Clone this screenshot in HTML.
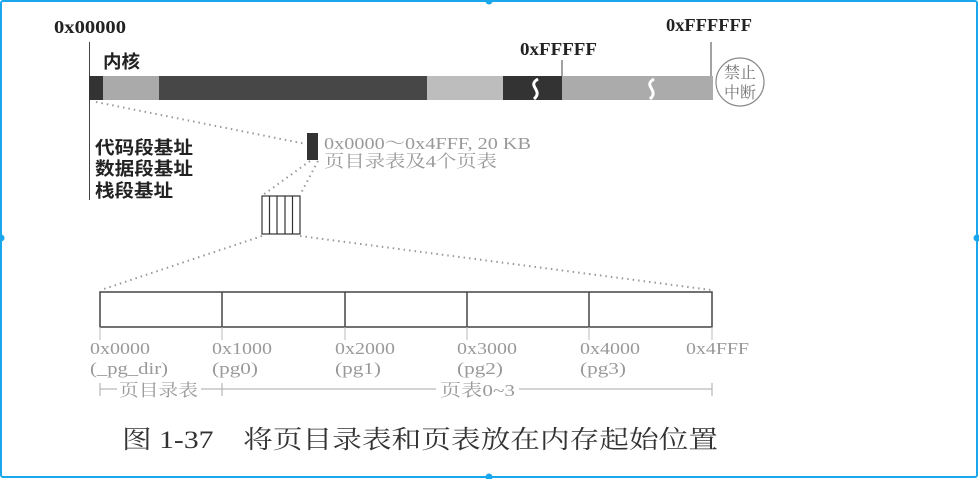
<!DOCTYPE html>
<html><head><meta charset="utf-8"><style>
html,body{margin:0;padding:0;background:#fff;}
body{width:979px;height:479px;overflow:hidden;}
text{font-family:"Liberation Serif","Noto Serif CJK SC",serif;}
.b{font-weight:bold;fill:#222;font-size:18px;}
.c{font-family:"Liberation Sans","Noto Sans CJK SC",sans-serif;font-weight:bold;fill:#222;font-size:18px;}
.g{fill:#999;font-size:17px;}
</style></head><body>
<svg width="979" height="479" viewBox="0 0 979 479" xmlns="http://www.w3.org/2000/svg">
<rect x="1" y="1" width="976" height="476" fill="#fff" stroke="#1aa7ec" stroke-width="2" rx="2"/>
<circle cx="489" cy="1" r="3.5" fill="#1aa7ec"/>
<circle cx="1" cy="238" r="3.5" fill="#1aa7ec"/>
<circle cx="977" cy="238" r="3.5" fill="#1aa7ec"/>
<circle cx="489" cy="477" r="3.5" fill="#1aa7ec"/>

<text x="54" y="33" class="b" textLength="72" lengthAdjust="spacingAndGlyphs">0x00000</text>
<text x="666" y="31" class="b" textLength="86" lengthAdjust="spacingAndGlyphs">0xFFFFFF</text>
<text x="520" y="55" class="b" textLength="77" lengthAdjust="spacingAndGlyphs">0xFFFFF</text>
<text x="103" y="68" class="c" textLength="37" lengthAdjust="spacingAndGlyphs">内核</text>

<line x1="89.5" y1="42" x2="89.5" y2="200" stroke="#444" stroke-width="1"/>
<line x1="562" y1="60" x2="562" y2="100" stroke="#444"/>
<line x1="711" y1="42" x2="711" y2="76" stroke="#444"/>

<rect x="89" y="76" width="14" height="24" fill="#333"/>
<rect x="103" y="76" width="56" height="24" fill="#aaa"/>
<rect x="159" y="76" width="268" height="24" fill="#474747"/>
<rect x="427" y="76" width="76" height="24" fill="#bdbdbd"/>
<rect x="503" y="76" width="59" height="24" fill="#333"/>
<rect x="562" y="76" width="151" height="24" fill="#ababab"/>
<path d="M538 79 C526 86 544 90 534 99" stroke="#fff" stroke-width="3" fill="none"/>
<path d="M654 79 C642 86 660 90 650 99" stroke="#fff" stroke-width="3" fill="none"/>

<circle cx="740" cy="82" r="24" fill="#fff" stroke="#888" stroke-width="1.2"/>
<text x="740" y="78" text-anchor="middle" style="font-size:16px;fill:#777">禁止</text>
<text x="740" y="98" text-anchor="middle" style="font-size:16px;fill:#777">中断</text>

<text x="95" y="154" class="c" textLength="98" lengthAdjust="spacingAndGlyphs">代码段基址</text>
<text x="95" y="175" class="c" textLength="98" lengthAdjust="spacingAndGlyphs">数据段基址</text>
<text x="95" y="197" class="c" textLength="78" lengthAdjust="spacingAndGlyphs">栈段基址</text>

<g stroke="#999" stroke-width="2" stroke-dasharray="1.5 4" fill="none">
<line x1="96" y1="102" x2="306" y2="144"/>
<line x1="310" y1="161" x2="263" y2="195"/>
<line x1="318" y1="161" x2="300" y2="195"/>
<line x1="262" y1="236" x2="101" y2="290"/>
<line x1="300" y1="236" x2="711" y2="290"/>
</g>
<rect x="307" y="133" width="11" height="27" fill="#333"/>
<text x="324" y="149" class="g" textLength="207" lengthAdjust="spacingAndGlyphs">0x0000～0x4FFF, 20 KB</text>
<text x="324" y="167" class="g" textLength="173" lengthAdjust="spacingAndGlyphs">页目录表及4个页表</text>

<g stroke="#333" stroke-width="1.2" fill="none">
<rect x="262" y="196" width="38" height="38"/>
<line x1="269.5" y1="196" x2="269.5" y2="234"/>
<line x1="277" y1="196" x2="277" y2="234"/>
<line x1="285" y1="196" x2="285" y2="234"/>
<line x1="292.5" y1="196" x2="292.5" y2="234"/>
</g>

<g stroke="#444" stroke-width="1.5" fill="none">
<rect x="100" y="292" width="612" height="35"/>
<line x1="222" y1="292" x2="222" y2="327"/>
<line x1="345" y1="292" x2="345" y2="327"/>
<line x1="467" y1="292" x2="467" y2="327"/>
<line x1="589" y1="292" x2="589" y2="327"/>
</g>
<g stroke="#bbb" stroke-width="1">
<line x1="100" y1="327" x2="100" y2="340"/>
<line x1="222" y1="327" x2="222" y2="340"/>
<line x1="345" y1="327" x2="345" y2="340"/>
<line x1="467" y1="327" x2="467" y2="340"/>
<line x1="589" y1="327" x2="589" y2="340"/>
<line x1="712" y1="327" x2="712" y2="340"/>
</g>
<g class="g">
<text x="90" y="354" class="g" textLength="60" lengthAdjust="spacingAndGlyphs">0x0000</text><text x="90" y="374" class="g" textLength="78" lengthAdjust="spacingAndGlyphs">(_pg_dir)</text>
<text x="212" y="354" class="g" textLength="60" lengthAdjust="spacingAndGlyphs">0x1000</text><text x="212" y="374" class="g" textLength="46" lengthAdjust="spacingAndGlyphs">(pg0)</text>
<text x="335" y="354" class="g" textLength="60" lengthAdjust="spacingAndGlyphs">0x2000</text><text x="335" y="374" class="g" textLength="46" lengthAdjust="spacingAndGlyphs">(pg1)</text>
<text x="457" y="354" class="g" textLength="60" lengthAdjust="spacingAndGlyphs">0x3000</text><text x="457" y="374" class="g" textLength="46" lengthAdjust="spacingAndGlyphs">(pg2)</text>
<text x="580" y="354" class="g" textLength="60" lengthAdjust="spacingAndGlyphs">0x4000</text><text x="580" y="374" class="g" textLength="46" lengthAdjust="spacingAndGlyphs">(pg3)</text>
<text x="686" y="354" class="g" textLength="63" lengthAdjust="spacingAndGlyphs">0x4FFF</text>
</g>

<g stroke="#aaa" stroke-width="1">
<line x1="100" y1="383" x2="100" y2="396"/>
<line x1="100" y1="389" x2="117" y2="389"/>
<line x1="201" y1="389" x2="222" y2="389"/>
<line x1="222" y1="383" x2="222" y2="396"/>
<line x1="222" y1="389" x2="436" y2="389"/>
<line x1="519" y1="389" x2="712" y2="389"/>
<line x1="712" y1="383" x2="712" y2="396"/>
</g>
<text x="119" y="396" class="g" textLength="79" lengthAdjust="spacingAndGlyphs">页目录表</text>
<text x="440" y="396" class="g" textLength="75" lengthAdjust="spacingAndGlyphs">页表0~3</text>

<text x="122" y="448" style="font-size:25px;fill:#333" textLength="596" lengthAdjust="spacingAndGlyphs">图 1-37　将页目录表和页表放在内存起始位置</text>
</svg>
</body></html>
